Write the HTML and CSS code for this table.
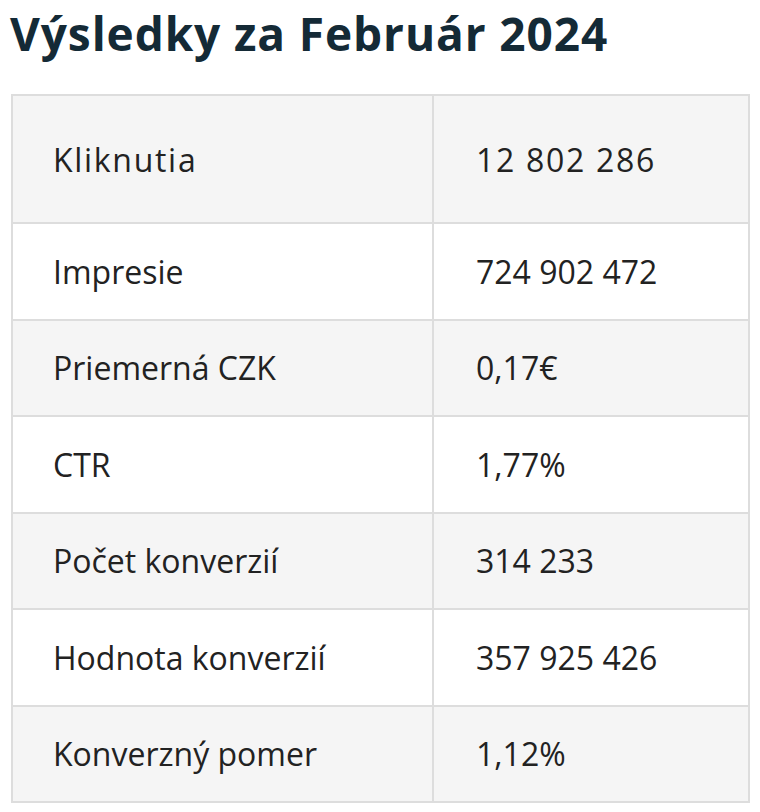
FILE: index.html
```html
<!DOCTYPE html>
<html lang="sk">
<head>
<meta charset="utf-8">
<link rel="stylesheet" href="styles.css">
</head>
<body>
<h2 class="title">Výsledky za Február 2024</h2>
<table class="results">
  <colgroup><col class="c-label"><col class="c-value"></colgroup>
  <tr class="first"><td>Kliknutia</td><td>12 802 286</td></tr>
  <tr><td>Impresie</td><td>724 902 472</td></tr>
  <tr><td>Priemerná CZK</td><td>0,17€</td></tr>
  <tr><td>CTR</td><td>1,77%</td></tr>
  <tr><td>Počet konverzií</td><td>314 233</td></tr>
  <tr><td>Hodnota konverzií</td><td>357 925 426</td></tr>
  <tr><td>Konverzný pomer</td><td>1,12%</td></tr>
</table>
</body>
</html>
```
FILE: styles.css
```css
html, body {
  margin: 0;
  padding: 0;
  background: #ffffff;
}
body {
  font-family: "Open Sans", "Liberation Sans", sans-serif;
  color: #222222;
}
.title {
  margin: 0;
  padding: 4px 0 0 10px;
  font-size: 46px;
  line-height: 58px;
  font-weight: 700;
  letter-spacing: 0.9px;
  color: #142a36;
}
.results {
  margin: 32px 0 0 11px;
  width: 737px;
  border-collapse: collapse;
  table-layout: fixed;
  font-size: 32px;
}
.c-label { width: 421px; }
.c-value { width: 316px; }
.results td {
  border: 2px solid #dddddd;
  padding: 0 0 0 42px;
  height: 94.5px;
  white-space: nowrap;
}
.results td:first-child {
  padding-left: 40px;
}
.results tr:nth-child(odd) td {
  background: #f5f5f5;
}
.results tr.first td {
  height: 126px;
  letter-spacing: 1.7px;
}
```
